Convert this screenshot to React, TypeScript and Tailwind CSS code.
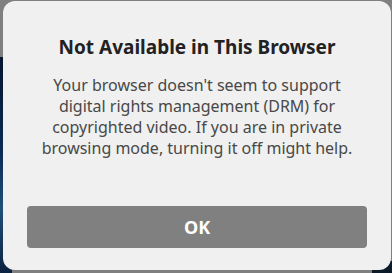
export default function App() {
  return (
    <div className="relative w-[392px] h-[273px] overflow-hidden bg-[#7f7f7f]">
      <div className="absolute left-0 top-[57px] w-[12px] h-[216px] bg-[linear-gradient(180deg,#07152e_0%,#0b2b55_45%,#1f4f7a_70%,#0b2140_100%)]" />
      <div className="absolute right-0 bottom-0 w-[20px] h-[12px] bg-[#0d1a2a]" />
      <div className="absolute left-[3px] top-[1px] w-[388px] h-[269px] rounded-[12px] bg-[#f0f0f0] flex flex-col items-center px-[20px] pt-[33px] pb-[22px] font-['Noto_Sans',sans-serif]">
        <h1 className="text-[19px] leading-[26px] font-bold text-[#222222] whitespace-nowrap">
          Not Available in This Browser
        </h1>
        <p className="mt-[15px] text-[16px] leading-[21px] text-[#484848] text-center whitespace-nowrap">
          Your browser doesn't seem to support
          <br />
          digital rights management (DRM) for
          <br />
          copyrighted video. If you are in private
          <br />
          browsing mode, turning it off might help.
        </p>
        <div className="flex-1" />
        <button className="w-[340px] h-[42px] shrink-0 rounded-[4px] bg-[#808080] text-white text-[18px] font-bold">
          OK
        </button>
      </div>
    </div>
  );
}
